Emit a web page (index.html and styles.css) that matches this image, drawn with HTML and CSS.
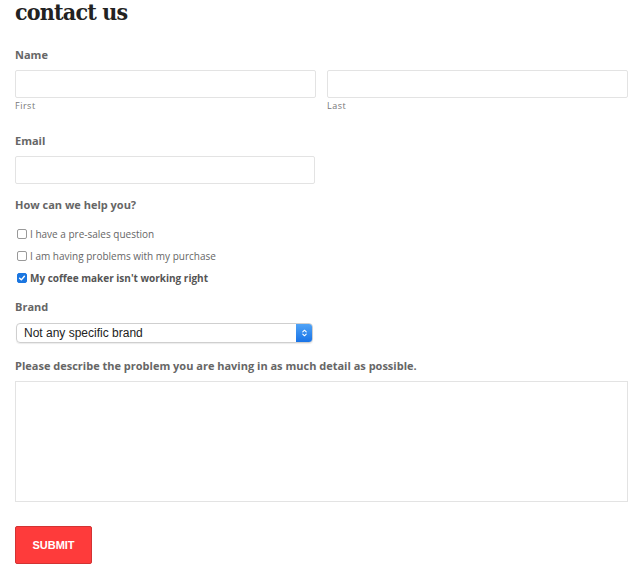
FILE: index.html
```html
<!DOCTYPE html>
<html>
<head>
<meta charset="utf-8">
<link rel="stylesheet" href="styles.css">
</head>
<body>
<div class="page">
  <h1 class="title">contact us</h1>
  <div class="field name">
    <div class="label">Name</div>
    <div class="row">
      <div class="col">
        <div class="input"></div>
        <div class="sub">First</div>
      </div>
      <div class="col">
        <div class="input"></div>
        <div class="sub">Last</div>
      </div>
    </div>
  </div>
  <div class="field email">
    <div class="label">Email</div>
    <div class="input half"></div>
  </div>
  <div class="field help">
    <div class="label">How can we help you?</div>
    <div class="checks">
      <label class="check"><span class="box"></span>I have a pre-sales question</label>
      <label class="check"><span class="box"></span>I am having problems with my purchase</label>
      <label class="check checked"><span class="box on"><svg viewBox="0 0 10 10" width="8" height="8"><path d="M2 5.2 L4.2 7.3 L8 2.8" fill="none" stroke="#fff" stroke-width="1.8" stroke-linecap="round" stroke-linejoin="round"/></svg></span>My coffee maker isn't working right</label>
    </div>
  </div>
  <div class="field brand">
    <div class="label">Brand</div>
    <div class="select"><span class="sel-text">Not any specific brand</span><span class="sel-btn"><svg viewBox="0 0 10 14" width="7" height="10"><path d="M2.5 5.5 L5 3 L7.5 5.5 M2.5 8.5 L5 11 L7.5 8.5" fill="none" stroke="#fff" stroke-width="1.5" stroke-linecap="round" stroke-linejoin="round"/></svg></span></div>
  </div>
  <div class="field desc">
    <div class="label">Please describe the problem you are having in as much detail as possible.</div>
    <div class="textarea"></div>
  </div>
  <button class="submit">SUBMIT</button>
</div>
</body>
</html>
```

FILE: styles.css
```css
html, body { margin: 0; padding: 0; background: #fff; }
.page {
  padding: 0 12px 0 15px;
  font-family: "Open Sans", "Liberation Sans", sans-serif;
  color: #666;
  display: flex;
  flex-direction: column;
}
.title {
  margin: 0;
  font-family: "DejaVu Serif Condensed", "DejaVu Serif", serif;
  font-weight: bold;
  font-size: 23px;
  line-height: 24px;
  height: 24px;
  color: #222;
  letter-spacing: -0.8px;
}
.field { display: flex; flex-direction: column; }
.label {
  font-size: 11px;
  font-weight: bold;
  line-height: 14px;
  color: #666;
}
.name { margin-top: 24px; }
.name .label { margin-bottom: 8px; }
.row { display: flex; gap: 11px; }
.col { flex: 1; display: flex; flex-direction: column; }
.input {
  height: 26px;
  border: 1px solid #e3e3e3;
  border-radius: 2px;
  background: #fff;
}
.half { width: 298px; }
.sub {
  font-size: 9px;
  line-height: 12px;
  margin-top: 2px;
  color: #777;
  letter-spacing: 0.5px;
}
.email { margin-top: 22px; }
.email .label { margin-bottom: 8px; }
.help { margin-top: 14px; }
.checks { display: flex; flex-direction: column; gap: 8px; margin-top: 15px; }
.check {
  display: flex;
  align-items: center;
  font-size: 10px;
  line-height: 14px;
  color: #666;
}
.check.checked { font-weight: bold; color: #555; }
.box {
  width: 8px; height: 8px;
  border: 1px solid #999;
  border-radius: 2px;
  margin: 0 3px 0 2px;
  display: inline-flex;
  align-items: center;
  justify-content: center;
  background: #fff;
}
.box.on { background: #1b76e0; border-color: #1b76e0; }
.brand { margin-top: 15px; }
.brand .label { margin-bottom: 9px; }
.select {
  width: 297px;
  height: 20px;
  margin-left: 1px;
  border: 1px solid #cfcfcf;
  border-radius: 4px;
  box-sizing: border-box;
  display: flex;
  align-items: center;
  justify-content: space-between;
  font-family: "Liberation Sans", sans-serif;
  font-size: 12px;
  color: #222;
  box-shadow: 0 1px 1px rgba(0,0,0,0.08);
  overflow: hidden;
}
.sel-text { padding-left: 7px; }
.sel-btn {
  width: 17px; height: 20px;
  background: linear-gradient(#53a6f7, #1671e6);
  display: flex; align-items: center; justify-content: center;
  margin-right: -1px;
}
.desc { margin-top: 16px; }
.desc .label { margin-bottom: 8px; }
.textarea {
  height: 119px;
  border: 1px solid #e3e3e3;
  background: #fff;
}
.submit {
  margin-top: 24px;
  width: 77px;
  height: 38px;
  background: #fe3b3b;
  border: 1px solid #d23333;
  border-radius: 2px;
  color: #fff;
  font-family: "Liberation Sans", sans-serif;
  font-weight: 900;
  font-size: 11px;
  padding: 0;
  align-self: flex-start;
}
```
